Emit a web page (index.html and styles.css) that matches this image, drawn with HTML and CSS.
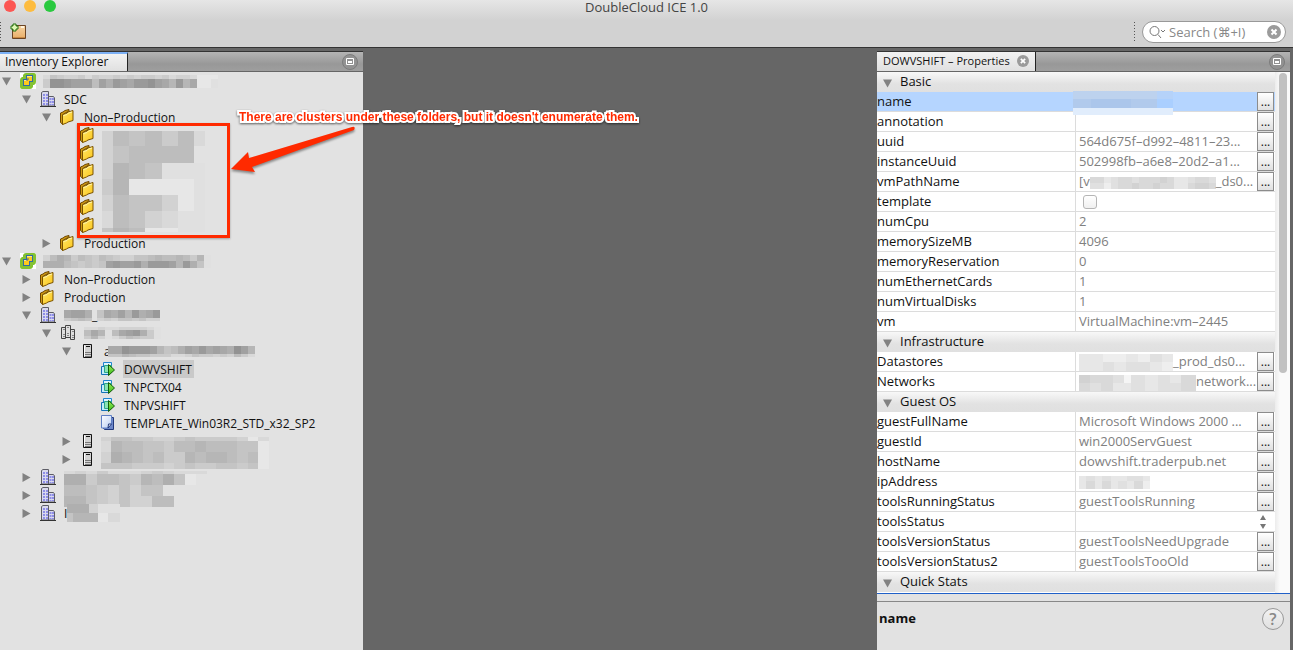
FILE: index.html
```html
<!DOCTYPE html>
<html lang="en">
<head>
<meta charset="utf-8">
<title>DoubleCloud ICE 1.0</title>
<link rel="stylesheet" href="styles.css">
</head>
<body>
<svg class="symbols" aria-hidden="true">
  <linearGradient id="g-folder" x1="0" y1="0" x2="1" y2="1"><stop offset="0" stop-color="#ffe968"/><stop offset="1" stop-color="#fcc419"/></linearGradient>
  <linearGradient id="g-play" x1="0" y1="0" x2="0" y2="1"><stop offset="0" stop-color="#9cf05c"/><stop offset="1" stop-color="#35b816"/></linearGradient>
  <linearGradient id="g-page" x1="0" y1="0" x2="1" y2="1"><stop offset="0" stop-color="#ffffff"/><stop offset="1" stop-color="#b9cdf2"/></linearGradient>
  <linearGradient id="g-box" x1="0" y1="0" x2="0" y2="1"><stop offset="0" stop-color="#f6d3a2"/><stop offset="1" stop-color="#e9ae68"/></linearGradient>
  <symbol id="i-down" viewBox="0 0 9 8"><path d="M0 0h9L4.500 8z" fill="#828282"/></symbol>
  <symbol id="i-right" viewBox="0 0 8 9"><path d="M0 0v9L8 4.500z" fill="#828282"/></symbol>
  <symbol id="i-folder" viewBox="0 0 16 16">
    <path d="M.5 4L3 3l2-1.500L9 .5V2L3.500 5 3 15.500.5 13.500z" fill="#cf9a12" stroke="#6d4600"/>
    <path d="M2.500 5.500L6.500 4.500 8 3l5-1.500V11.500L8 13l-1.500 1-4 1.500z" fill="url(#g-folder)" stroke="#7a5200"/>
    <path d="M3.500 6.500l3.500-1L8.500 4l3.500-1" fill="none" stroke="#fff6b0"/>
  </symbol>
  <symbol id="i-dc" viewBox="0 0 16 16">
    <path d="M1.500 15V1.500L3 .5h5.500V15zM8.500 15V5.500h5L14.500 7v8z" fill="#d9d9ee" stroke="#5d5d66"/>
    <path d="M3 3h2v2H3zM6 3h2v2H6zM3 6h2v2H3zM6 6h2v2H6zM3 9h2v2H3zM6 9h2v2H6zM3 12h2v2H3zM6 12h2v2H6zM9.500 7h2v2h-2zM12 7h2v2h-2zM9.500 10h2v2h-2zM12 10h2v2h-2zM9.500 13h2v1h-2zM12 13h2v1h-2z" fill="#8e8ee6"/>
    <path d="M0 15.500h16" stroke="#333"/>
  </symbol>
  <symbol id="i-vc" viewBox="0 0 16 16">
    <path d="M0 0h16v16H0z" fill="#fff"/>
    <path d="M6 0h8q2 0 2 2v7q0 2-2 3h-1v2q-1 2-3 2H2q-2 0-2-2V7q0-2 2-3h1V2q1-2 3-2z" fill="#83c232"/>
    <path d="M6 2h7v7h-3v4H3V6h3z" fill="#2f6aa6"/>
    <path d="M7 3h5v5H9v4H4V7h3z" fill="#ffc91e"/>
    <path d="M7 3.500h5M4 7.500h3" stroke="#ffe98a"/>
    <path d="M7 8V6h2" fill="none" stroke="#456f8c"/>
  </symbol>
  <symbol id="i-cluster" viewBox="0 0 16 16">
    <path d="M5.500.5h5v12h-5zM1.500 2.500h4v11h-4zM10.500 4.500h4v10h-4z" fill="#dedede" stroke="#444"/>
    <path d="M3 4.500h2M7 2.500h2M12 6.500h2M3 9.500h2M3 11.500h2M7 8.500h2M7 10.500h2M12 10.500h2M12 12.500h2" stroke="#888"/>
  </symbol>
  <symbol id="i-host" viewBox="0 0 16 16">
    <path d="M3.500 1.500h8v13h-8z" fill="#d2d2d2" stroke="#151515"/>
    <path d="M4.500 2.500v11" stroke="#fff"/><path d="M6 3.500h4" stroke="#151515"/>
    <path d="M5 9.500h6M5 11.500h6M5 13.500h6" stroke="#777"/>
  </symbol>
  <symbol id="i-vm" viewBox="0 0 16 16">
    <path d="M3.500 1.500h8v8h-8z" fill="#dff3ff" stroke="#1e84d0"/>
    <path d="M1.500 5.500h8v8h-8z" fill="#c4ecfa" stroke="#1672b8"/>
    <path d="M4.500 4.500h7v7h-7z" fill="#8be3b4" stroke="#2aa58c"/>
    <path d="M8.500 3.500v11l6-5.500z" fill="url(#g-play)" stroke="#125c0a"/>
  </symbol>
  <symbol id="i-template" viewBox="0 0 16 16">
    <path d="M3.500 2.500h10v12h-9l-1-1z" fill="#6d87c9" stroke="#22397c"/>
    <path d="M1.500.5h10v8.500l-3.500 4h-6.500z" fill="url(#g-page)" stroke="#5f7fc4"/>
    <path d="M11.500 9H8.500L8 13z" fill="#fff" stroke="#22397c"/>
  </symbol>
  <symbol id="i-close" viewBox="0 0 14 14"><circle cx="7" cy="7" r="7" fill="#9b9b9b"/><path d="M4.500 4.500l5 5M9.500 4.500l-5 5" stroke="#fff" stroke-width="2"/></symbol>
  <symbol id="i-max" viewBox="0 0 16 16"><circle cx="8" cy="8" r="7.500" fill="#929292" stroke="#7c7c7c"/><path d="M4.500 4.500h7v6h-7z" fill="none" stroke="#fff"/><path d="M6 7h4v2H6z" fill="#fff"/></symbol>
</svg>

<div class="app">
  <header class="chrome">
    <div class="titlebar">
      <div class="lights"><span class="light red"></span><span class="light amber"></span><span class="light green"></span></div>
      <h1 class="title">DoubleCloud ICE 1.0</h1>
    </div>
    <div class="toolbar">
      <span class="grip"></span>
      <button class="icon-button" type="button" aria-label="Add">
        <svg width="18" height="18" viewBox="0 0 18 18"><path d="M2.500 2.500h13v13h-13z" fill="url(#g-box)" stroke="#6b4424"/><path d="M11 3h3v2h-3z" fill="#fff3dc"/><path d="M3 14.500h12" stroke="#c98a45"/><path d="M3 1h3v2h2v3H6v2H3V6H1V3h2z" fill="#dff7b5" stroke="#23700f"/></svg>
      </button>
      <span class="grip grip-end"></span>
      <label class="search">
        <svg width="18" height="14" viewBox="0 0 18 14" fill="none" stroke="#777"><circle cx="5.500" cy="6" r="4.500"/><path d="M9 9.500l3 3.500M12 5l2 2 2-2"/></svg>
        <input class="search-input" type="text" aria-label="Search" placeholder="Search (⌘+I)">
        <button class="bare" type="button" aria-label="Clear search"><svg width="14" height="14"><use href="#i-close"/></svg></button>
      </label>
    </div>
  </header>

  <main class="workspace">
    <section class="panel">
      <div class="tabs">
        <button class="tab active" type="button">Inventory Explorer</button>
        <button class="bare max" type="button" aria-label="Maximize"><svg width="16" height="16"><use href="#i-max"/></svg></button>
      </div>
      <ul class="tree">
        <li><div class="node"><svg class="arrow"><use href="#i-down"/></svg><svg class="icon"><use href="#i-vc"/></svg><svg class="mosaic" data-cell="7" data-heights="4,9" data-rows="b89aa9b9aa9a9a99a9baabddd|9112333735234221346264ddc"></svg></div>
          <ul>
            <li><div class="node"><svg class="arrow"><use href="#i-down"/></svg><svg class="icon"><use href="#i-dc"/></svg><span class="label">SDC</span></div>
              <ul>
                <li><div class="node"><svg class="arrow"><use href="#i-down"/></svg><svg class="icon"><use href="#i-folder"/></svg><span class="label">Non–Production</span></div>
                  <ul class="marked">
                    <li><div class="node"><span class="arrow"></span><svg class="icon"><use href="#i-folder"/></svg></div></li>
                    <li><div class="node"><span class="arrow"></span><svg class="icon"><use href="#i-folder"/></svg></div></li>
                    <li><div class="node"><span class="arrow"></span><svg class="icon"><use href="#i-folder"/></svg></div></li>
                    <li><div class="node"><span class="arrow"></span><svg class="icon"><use href="#i-folder"/></svg></div></li>
                    <li><div class="node"><span class="arrow"></span><svg class="icon"><use href="#i-folder"/></svg></div></li>
                    <li><div class="node"><span class="arrow"></span><svg class="icon"><use href="#i-folder"/></svg></div></li>
                    <li class="cover" aria-hidden="true"><svg class="mosaic" data-cell="11,16,16,17,16,16,11" data-heights="15,17,16,16,16,17,4" data-rows="a78797b|a87777.|a678ccc|96ddddc|a788adc|b78abcc|867ddcc"></svg></li>
                    <li class="callout">
                      <span class="callout-text">There are clusters under these folders, but it doesn't enumerate them.</span>
                      <svg class="callout-arrow" width="128" height="56" viewBox="0 0 128 56"><path d="M1 43L18 26 19 32 122 1 Q126 0 124 4L22 41 25 46z" fill="#ff2a00"/></svg>
                    </li>
                  </ul></li>
                <li><div class="node"><svg class="arrow"><use href="#i-right"/></svg><svg class="icon"><use href="#i-folder"/></svg><span class="label">Production</span></div></li>
              </ul></li>
          </ul></li>
        <li><div class="node"><svg class="arrow"><use href="#i-down"/></svg><svg class="icon"><use href="#i-vc"/></svg><svg class="mosaic" data-cell="7" data-heights="6,7" data-rows="a7569789789aa8876776796c|55578989832332522236258c"></svg></div>
          <ul>
            <li><div class="node"><svg class="arrow"><use href="#i-right"/></svg><svg class="icon"><use href="#i-folder"/></svg><span class="label">Non–Production</span></div></li>
            <li><div class="node"><svg class="arrow"><use href="#i-right"/></svg><svg class="icon"><use href="#i-folder"/></svg><span class="label">Production</span></div></li>
            <li><div class="node"><svg class="arrow"><use href="#i-down"/></svg><svg class="icon"><use href="#i-dc"/></svg><span class="label"><svg class="mosaic" data-cell="7" data-heights="8,3" data-rows="4335|9878"></svg>_<svg class="mosaic" data-cell="7" data-heights="8,3" data-rows="845362542|a9a8898aa"></svg></span></div>
              <ul>
                <li><div class="node"><svg class="arrow"><use href="#i-down"/></svg><svg class="icon"><use href="#i-cluster"/></svg><span class="label"><svg class="mosaic" data-cell="7" data-heights="3,6,3" data-rows="bbabbaaaabc|746c743259c|96acb97899c"></svg></span></div>
                  <ul>
                    <li><div class="node"><svg class="arrow"><use href="#i-down"/></svg><svg class="icon"><use href="#i-host"/></svg><span class="label clipped">a<svg class="mosaic" data-cell="7" data-heights="8,3" data-rows="441222368753424345136|886788999bba899a9a79b"></svg></span></div>
                      <ul>
                        <li><div class="node"><span class="arrow"></span><svg class="icon"><use href="#i-vm"/></svg><span class="label selected">DOWVSHIFT</span></div></li>
                        <li><div class="node"><span class="arrow"></span><svg class="icon"><use href="#i-vm"/></svg><span class="label">TNPCTX04</span></div></li>
                        <li><div class="node"><span class="arrow"></span><svg class="icon"><use href="#i-vm"/></svg><span class="label">TNPVSHIFT</span></div></li>
                        <li><div class="node"><span class="arrow"></span><svg class="icon"><use href="#i-template"/></svg><span class="label">TEMPLATE_Win03R2_STD_x32_SP2</span></div></li>
                      </ul></li>
                    <li><div class="node"><svg class="arrow"><use href="#i-right"/></svg><svg class="icon"><use href="#i-host"/></svg></div>
                      <span class="cover cover-hosts"><svg class="mosaic" data-cell="10,11" data-heights="4,11,11,6" data-rows="a8899aa989999adb|b67788977677788d|a56787996766787d|888999a98998898d"></svg></span></li>
                    <li><div class="node"><svg class="arrow"><use href="#i-right"/></svg><svg class="icon"><use href="#i-host"/></svg></div></li>
                  </ul></li>
              </ul></li>
            <li><div class="node"><svg class="arrow"><use href="#i-right"/></svg><svg class="icon"><use href="#i-dc"/></svg></div>
              <span class="cover cover-dcs"><svg class="mosaic" data-cell="11" data-heights="3,11,11,11" data-rows="bab9bbba9abbb|5597789675 8d.|7789a8a88....|6689a8aa77..."></svg></span></li>
            <li><div class="node"><svg class="arrow"><use href="#i-right"/></svg><svg class="icon"><use href="#i-dc"/></svg></div></li>
            <li><div class="node"><svg class="arrow"><use href="#i-right"/></svg><svg class="icon"><use href="#i-dc"/></svg><span class="label">I<svg class="mosaic" data-cell="6,16,9,10,12" data-heights="9,9" data-rows="55acc|866db"></svg></span></div></li>
          </ul></li>
      </ul>
    </section>

    <section class="canvas"></section>

    <section class="panel props">
      <div class="tabs">
        <div class="tab tab-props">DOWVSHIFT – Properties <button class="bare" type="button" aria-label="Close tab"><svg width="12" height="12" viewBox="0 0 14 14"><use href="#i-close"/></svg></button></div>
        <button class="bare max" type="button" aria-label="Maximize"><svg width="16" height="16"><use href="#i-max"/></svg></button>
      </div>
      <div class="sheet">
        <table class="grid">
          <colgroup><col class="col-key"><col><col class="col-more"></colgroup>
          <tbody>
            <tr class="group"><th colspan="3"><svg class="arrow"><use href="#i-down"/></svg>Basic</th></tr>
            <tr class="current"><th scope="row">name</th><td><span class="cover cover-name"><svg width="100" height="24"><path d="M0 0h100v8H0z" fill="#bdd2ee"/><path d="M84 0h16v8H84z" fill="#b5d2f9"/><path d="M0 8h100v9H0z" fill="#b1caec"/><path d="M18 8h40v9H18z" fill="#abc6eb"/><path d="M84 8h16v9H84z" fill="#aacfff"/><path d="M0 17h100v7H0z" fill="#e1edfc"/></svg></span></td><td><button class="more" type="button">...</button></td></tr>
            <tr><th scope="row">annotation</th><td></td><td><button class="more" type="button">...</button></td></tr>
            <tr><th scope="row">uuid</th><td>564d675f–d992–4811–23...</td><td><button class="more" type="button">...</button></td></tr>
            <tr><th scope="row">instanceUuid</th><td>502998fb–a6e8–20d2–a1...</td><td><button class="more" type="button">...</button></td></tr>
            <tr><th scope="row">vmPathName</th><td>[v<svg class="mosaic" data-cell="7" data-heights="6,6" data-rows="bbdcbbcbbbabddcbbc|ccecbbabbabbddbaab"></svg>_ds0...</td><td><button class="more" type="button">...</button></td></tr>
            <tr><th scope="row"><label for="template">template</label></th><td><input class="check" type="checkbox" id="template"></td><td></td></tr>
            <tr><th scope="row">numCpu</th><td>2</td><td></td></tr>
            <tr><th scope="row">memorySizeMB</th><td>4096</td><td></td></tr>
            <tr><th scope="row">memoryReservation</th><td>0</td><td></td></tr>
            <tr><th scope="row">numEthernetCards</th><td>1</td><td></td></tr>
            <tr><th scope="row">numVirtualDisks</th><td>1</td><td></td></tr>
            <tr><th scope="row">vm</th><td>VirtualMachine:vm–2445</td><td></td></tr>
            <tr class="group"><th colspan="3"><svg class="arrow"><use href="#i-down"/></svg>Infrastructure</th></tr>
            <tr><th scope="row">Datastores</th><td><svg class="mosaic" data-cell="12,12,11,12,12,12,12,11" data-heights="8,9" data-rows="ddeedecd|ddcdccde"></svg>_prod_ds0...</td><td><button class="more" type="button">...</button></td></tr>
            <tr><th scope="row">Networks</th><td><svg class="mosaic" data-cell="11,11,12,11,7,14,13,12,11,15" data-heights="8,8" data-rows="abbcfcdcdb|bcbddcdccb"></svg>network...</td><td><button class="more" type="button">...</button></td></tr>
            <tr class="group"><th colspan="3"><svg class="arrow"><use href="#i-down"/></svg>Guest OS</th></tr>
            <tr><th scope="row">guestFullName</th><td>Microsoft Windows 2000 ...</td><td><button class="more" type="button">...</button></td></tr>
            <tr><th scope="row">guestId</th><td>win2000ServGuest</td><td><button class="more" type="button">...</button></td></tr>
            <tr><th scope="row">hostName</th><td>dowvshift.traderpub.net</td><td><button class="more" type="button">...</button></td></tr>
            <tr><th scope="row">ipAddress</th><td><svg class="mosaic" data-cell="7,9" data-heights="5,8" data-rows="dcdcddccd|dbdbdcdbe"></svg></td><td><button class="more" type="button">...</button></td></tr>
            <tr><th scope="row">toolsRunningStatus</th><td>guestToolsRunning</td><td><button class="more" type="button">...</button></td></tr>
            <tr><th scope="row"><label for="status">toolsStatus</label></th><td colspan="2"><select id="status" class="select"><option></option></select><svg class="stepper" width="6" height="14" viewBox="0 0 6 14"><path d="M3 0l3 5H0zM0 9h6l-3 5z" fill="#777"/></svg></td></tr>
            <tr><th scope="row">toolsVersionStatus</th><td>guestToolsNeedUpgrade</td><td><button class="more" type="button">...</button></td></tr>
            <tr><th scope="row">toolsVersionStatus2</th><td>guestToolsTooOld</td><td><button class="more" type="button">...</button></td></tr>
            <tr class="group"><th colspan="3"><svg class="arrow"><use href="#i-down"/></svg>Quick Stats</th></tr>
          </tbody>
        </table>
        <div class="scroll"><div class="thumb"></div></div>
      </div>
      <div class="about">
        <h2 class="about-name">name</h2>
        <button class="help" type="button">?</button>
      </div>
    </section>
  </main>
</div>
<script src="mosaic.js"></script>
</body>
</html>
```
FILE: styles.css
```css
*, *::before { box-sizing: border-box; }
body { margin: 0; font-family: "Open Sans", "Noto Sans", sans-serif; font-size: 12px; color: #111; background: #666; }
button, input, select { font: inherit; color: inherit; margin: 0; }
ul { list-style: none; margin: 0; padding: 0; }
svg { flex: none; }
.symbols { position: absolute; width: 0; height: 0; }
.app { display: flex; flex-direction: column; height: 100vh; overflow: hidden; }

.chrome { flex: none; height: 48px; background: linear-gradient(#e6e6e6, #d2d2d2 20px, #d2d2d2); border-bottom: 1px solid #333; }
.titlebar { display: grid; grid-template-columns: 1fr auto 1fr; align-items: start; height: 13px; padding: 0 4px; }
.lights { display: flex; gap: 8px; }
.light { width: 12px; height: 12px; border-radius: 50%; }
.red { background: #fc5753; }
.amber { background: #fdbc40; }
.green { background: #2ac940; }
.title { margin: 0; font-size: 13px; font-weight: 400; line-height: 15px; color: #444; }
.toolbar { display: flex; align-items: center; height: 38px; padding-right: 7px; }
.grip { width: 1px; height: 20px; background: repeating-linear-gradient(#555 0 1px, transparent 1px 3px); }
.grip-end { margin-left: auto; margin-right: 7px; }
.icon-button { display: flex; margin-left: 9px; padding: 0; border: 0; background: none; }
.bare { display: flex; padding: 0; border: 0; background: none; }
.search { display: flex; align-items: center; gap: 2px; width: 144px; height: 22px; padding: 0 4px 0 6px; background: #fff; border: 1px solid #999; border-radius: 11px; }
.search-input { flex: 1; min-width: 0; padding: 0; border: 0; outline: 0; background: none; font-size: 13px; line-height: 18px; font-family: "Open Sans", "DejaVu Sans", sans-serif; }
.search-input::placeholder { color: #888; opacity: 1; }

.workspace { flex: 1; min-height: 0; display: grid; grid-template-columns: 363px 1fr 413px; padding: 3px 3px 0 0; }
.panel { display: flex; flex-direction: column; min-width: 0; min-height: 0; background: #e2e2e2; }
.tabs { flex: none; display: flex; align-items: center; height: 21px; background: linear-gradient(#b4b4b4, #989898 12px, #9e9e9e); border-top: 1px solid #333; border-bottom: 1px solid #666; }
.tab { display: flex; align-items: center; gap: 5px; height: 100%; padding: 0 19px 2px 5px; border: 0; border-right: 1px solid #222; background: linear-gradient(#f2f2f2, #e0e0e0); color: #111; line-height: 16px; }
.tab.active { border-top: 2px solid #7cb0f5; }
.tab-props { padding: 0 6px 2px; font-size: 11px; gap: 7px; }
.max { margin-left: auto; margin-right: 5px; }

.tree { flex: 1; min-height: 0; }
.tree ul { padding-left: 20px; }
.tree li { position: relative; }
.node { display: flex; align-items: center; height: 18px; padding-left: 2px; }
.arrow { width: 9px; height: 9px; margin-right: 9px; }
.node .arrow { flex: none; }
.icon { width: 16px; height: 16px; margin-right: 7px; }
.label { display: flex; align-items: center; height: 18px; padding: 0 2px 0 1px; white-space: nowrap; }
.label.selected { background: #c9c9c9; }
.clipped .mosaic { margin-left: -3px; }
.tree .cover, .cover { position: absolute; }
.marked { position: relative; }
.marked::before { content: ""; position: absolute; z-index: 1; top: -3px; left: 37px; width: 153px; height: 115px; border: 3px solid #ff2a00; box-shadow: 0 1px 2px rgba(0, 0, 0, .3); }
.marked .cover { top: 5px; left: 62px; }
.cover-hosts { top: 5px; left: 41px; }
.cover-dcs { top: 3px; left: 44px; }
.tree .callout { position: absolute; z-index: 2; top: -18px; left: 190px; }
.callout-text { display: block; padding-left: 9px; white-space: nowrap; font: bold 12px/18px "Liberation Sans", Arial, sans-serif; color: #ff2a00; -webkit-text-stroke: 4px #fff; paint-order: stroke fill; filter: drop-shadow(0 1px 1px rgba(0, 0, 0, .6)); }
.callout-arrow { display: block; filter: drop-shadow(0 2px 1px rgba(0, 0, 0, .4)); }
.mosaic { display: block; flex: none; }

.sheet { flex: 1; min-height: 0; display: flex; align-items: flex-start; overflow: hidden; background: #fff; font-size: 13px; border-bottom: 1px solid #2060c8; }
.grid { flex: 1; min-width: 0; table-layout: fixed; border-collapse: separate; border-spacing: 0; }
.col-key { width: 199px; }
.col-more { width: 18px; }
.grid th, .grid td { height: 20px; padding: 0; border-bottom: 1px solid #dcdcdc; line-height: 19px; font-weight: 400; text-align: left; white-space: nowrap; }
.grid th { border-right: 1px solid #dcdcdc; }
.grid td { color: #808080; }
.grid td:nth-child(2) { padding-left: 3px; position: relative; }
.grid td .mosaic { display: inline-block; vertical-align: middle; }
.grid .group th { padding-bottom: 2px; line-height: 18px; border: 0; background: linear-gradient(#f8f8f8, #e2e2e2 12px, #e0e0e0); }
.group .arrow { margin: 0 8px 0 6px; vertical-align: -2px; }
.grid .current th, .grid .current td { background: #b5d5ff; border-right-color: #b5d5ff; }
.grid .cover-name { top: -1px; left: -3px; z-index: 1; line-height: 0; }
.more { display: block; width: 17px; height: 19px; padding: 0; border: 1px solid #8c8c8c; background: linear-gradient(#fff, #e0e0e0); color: #111; font-size: 12px; line-height: 18px; text-align: center; }
.check { appearance: none; display: block; width: 14px; height: 14px; margin-left: 4px; border: 1px solid #b5b5b5; border-radius: 3px; background: linear-gradient(#fff, #f0f0f0); }
.select { appearance: none; display: block; width: 100%; height: 19px; padding: 0; border: 0; background: none; }
.stepper { position: absolute; right: 9px; top: 3px; pointer-events: none; }
.scroll { align-self: stretch; width: 15px; padding: 1px 3px; background: linear-gradient(90deg, #ececec, #fafafa 5px, #fafafa); }
.thumb { width: 8px; height: 300px; margin-left: 1px; border-radius: 4px; background: #c1c1c1; }
.about { flex: none; display: flex; justify-content: space-between; align-items: flex-start; height: 56px; padding: 14px 6px 0 2px; background: linear-gradient(#e2e2e2 7px, #888 7px 8px, #e2e2e2 8px); }
.about-name { margin: 0; font-size: 13px; line-height: 20px; font-weight: 700; }
.help { width: 22px; height: 22px; padding: 0; border: 1px solid #999; border-radius: 50%; background: linear-gradient(#f2f2f2, #e0e0e0); font-size: 16px; line-height: 20px; color: #888; font-weight: 600; }
```
FILE: mosaic.js
```js
// Draws the redaction blocks. Each character of data-rows is a grey level in
// hex (0 = darkest); "." leaves a cell empty.
document.querySelectorAll('.mosaic').forEach(function (svg) {
  var widths = svg.dataset.cell.split(',').map(Number);
  var heights = svg.dataset.heights.split(',').map(Number);
  var y = 0;
  var widest = 0;
  svg.dataset.rows.replace(/ /g, '').split('|').forEach(function (row, r) {
    var x = 0;
    row.split('').forEach(function (c, i) {
      var w = widths[i % widths.length];
      if (c !== '.') {
        var v = 140 + parseInt(c, 16) * 7;
        var rect = document.createElementNS('http://www.w3.org/2000/svg', 'rect');
        rect.setAttribute('x', x);
        rect.setAttribute('y', y);
        rect.setAttribute('width', w);
        rect.setAttribute('height', heights[r]);
        rect.setAttribute('fill', 'rgb(' + v + ',' + v + ',' + v + ')');
        svg.appendChild(rect);
      }
      x += w;
    });
    widest = Math.max(widest, x);
    y += heights[r];
  });
  svg.setAttribute('width', widest);
  svg.setAttribute('height', y);
});
```
